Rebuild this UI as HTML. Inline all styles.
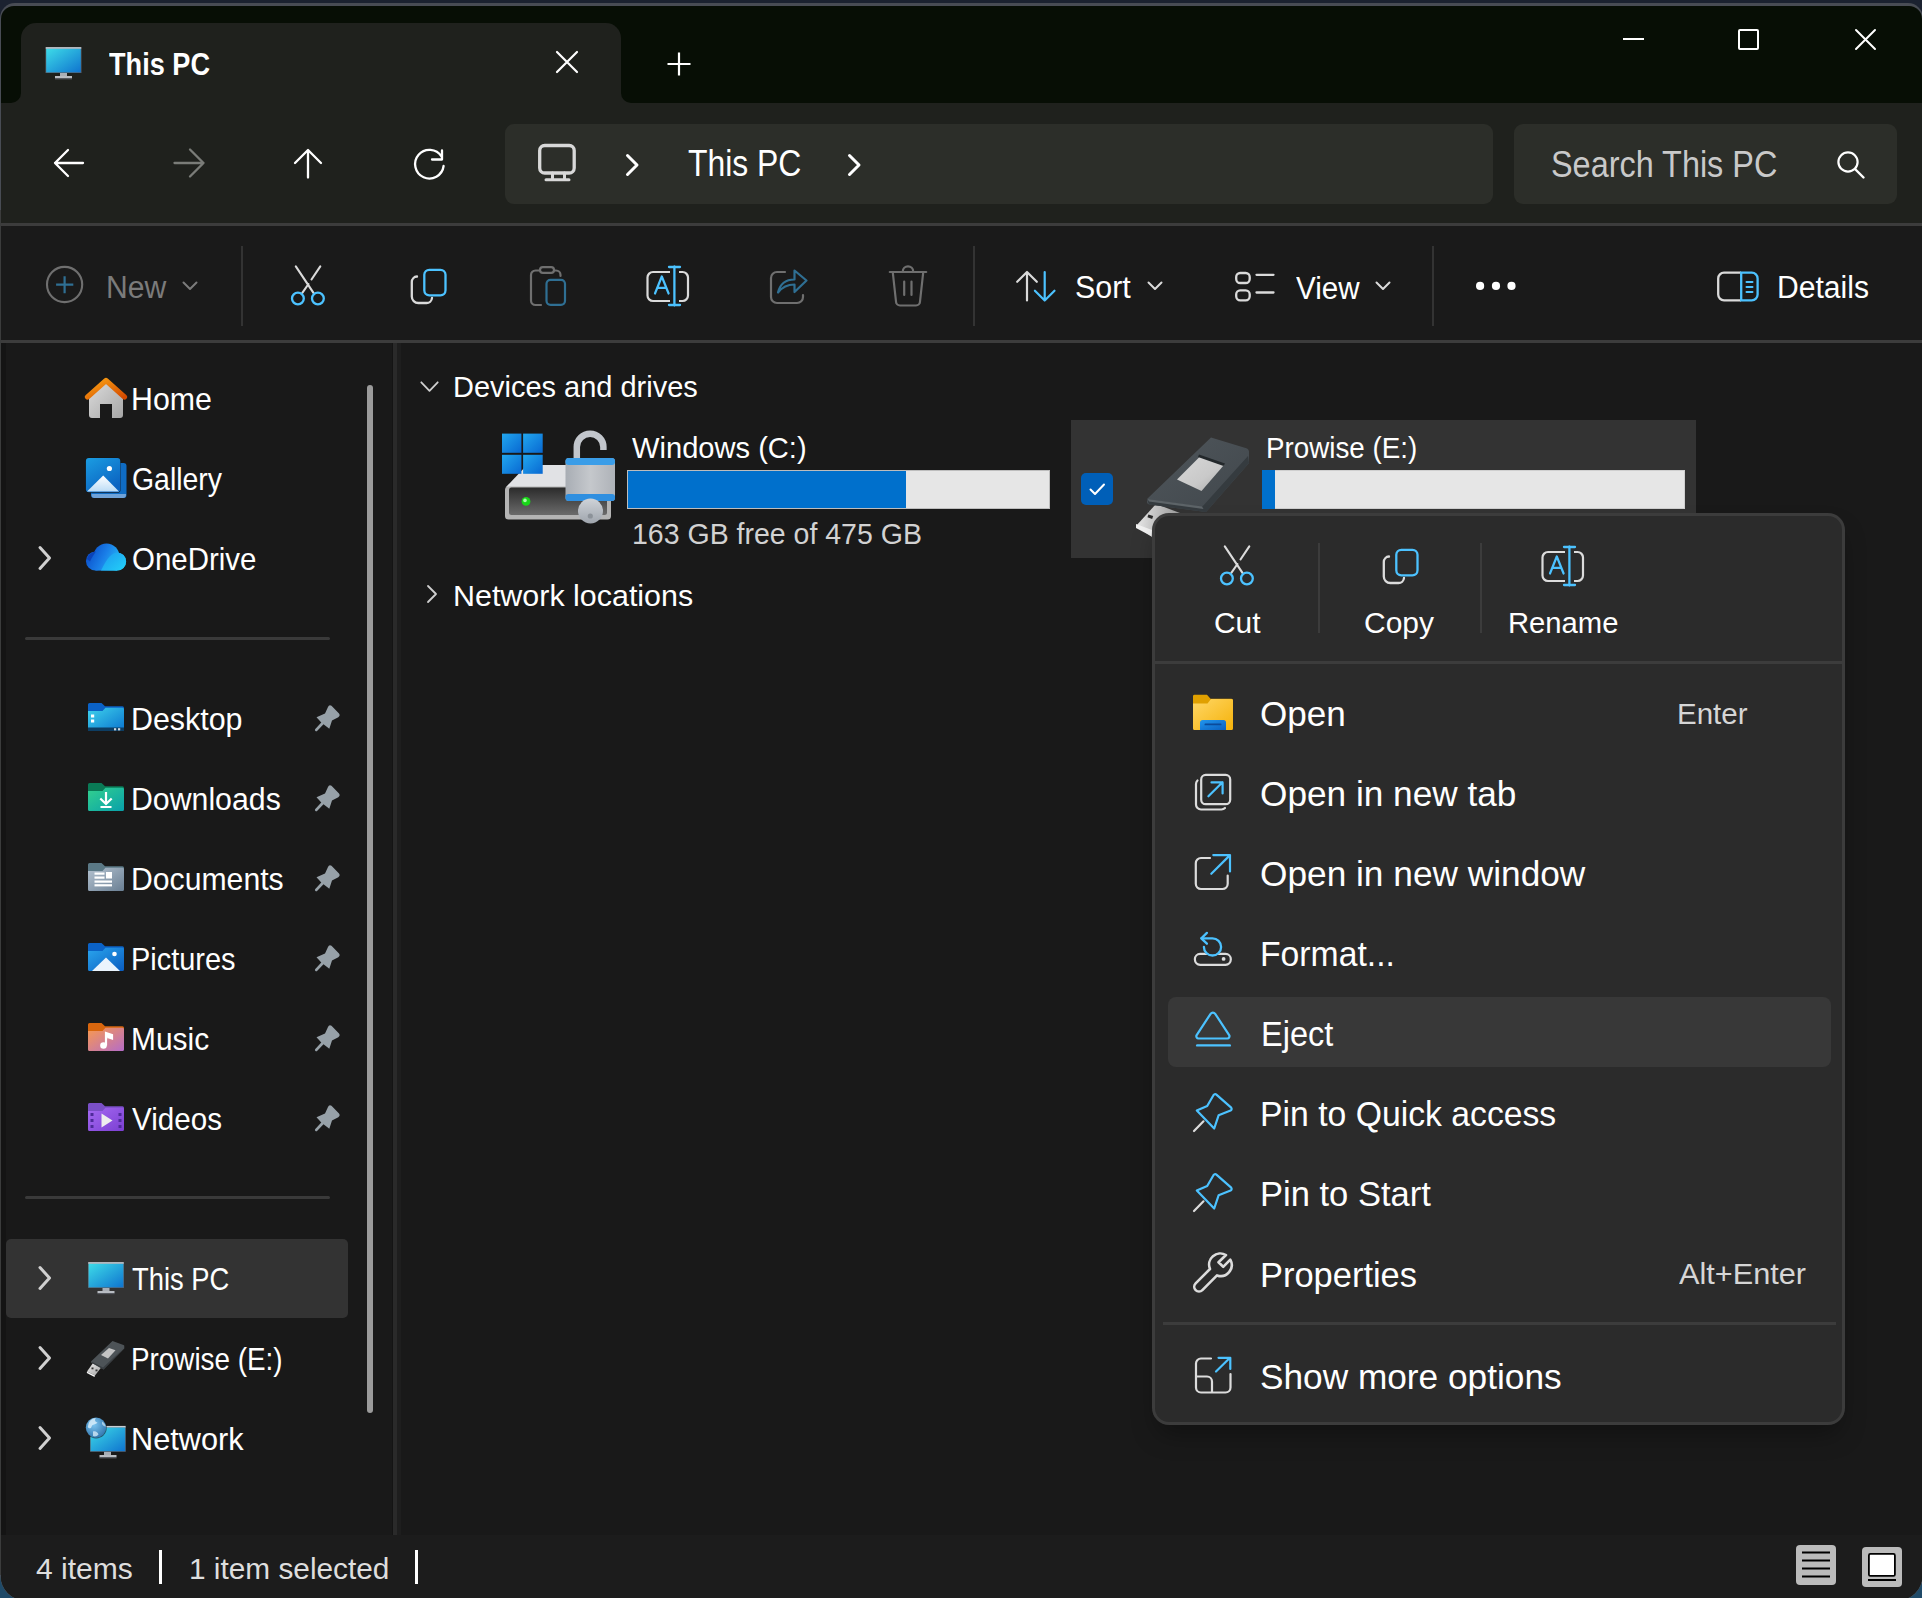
<!DOCTYPE html>
<html><head><meta charset="utf-8">
<style>
*{margin:0;padding:0;box-sizing:border-box}
html,body{width:1922px;height:1598px;overflow:hidden;background:#1b2230}
body{position:relative;font-family:"Liberation Sans",sans-serif;color:#fff}
.a{position:absolute}
.t{position:absolute;white-space:nowrap;line-height:1;transform-origin:0 0}
svg{position:absolute;overflow:visible}
</style></head><body>
<div class="a" style="left:0;top:1540px;width:40px;height:58px;background:#1f4a68"></div>
<div class="a" style="left:1880px;top:1540px;width:42px;height:58px;background:#1f4a68"></div>
<div class="a" style="left:0;top:3px;width:1923px;height:1598px;border-radius:15px 15px 26px 26px;background:#484c54"></div>
<div class="a" style="left:1px;top:6px;width:1921px;height:1594px;border-radius:13px 13px 24px 24px;background:#070e05;overflow:hidden"><div class="a" style="left:0;top:97px;width:1921px;height:120px;background:#1f211d"></div><div class="a" style="left:0;top:217px;width:1921px;height:3px;background:#3c3c3c"></div><div class="a" style="left:0;top:220px;width:1921px;height:114px;background:#1a1a1a"></div><div class="a" style="left:0;top:334px;width:1921px;height:3px;background:#3c3c3c"></div><div class="a" style="left:0;top:337px;width:1921px;height:1192px;background:#191919"></div><div class="a" style="left:391px;top:337px;width:1px;height:1192px;background:#141414"></div><div class="a" style="left:392px;top:337px;width:4px;height:1192px;background:#2a2a2a"></div><div class="a" style="left:396px;top:337px;width:4px;height:1192px;background:#1e1e1e"></div><div class="a" style="left:0;top:1529px;width:1921px;height:63px;background:#1c1c1c"></div></div>
<div class="a" style="left:0;top:210px;width:1px;height:1365px;background:#3b3c3c"></div>
<div class="a" style="left:1px;top:343px;width:5px;height:1192px;background:#141414"></div>
<div class="a" style="left:21px;top:23px;width:600px;height:85px;border-radius:15px 15px 0 0;background:#1f211d"></div>
<div class="a" style="left:1px;top:89px;width:20px;height:14px;background:#1f211d"></div>
<div class="a" style="left:1px;top:81px;width:20px;height:22px;background:#070e05;border-radius:0 0 10px 0"></div>
<div class="a" style="left:621px;top:89px;width:20px;height:14px;background:#1f211d"></div>
<div class="a" style="left:621px;top:81px;width:20px;height:22px;background:#070e05;border-radius:0 0 0 10px"></div>
<svg style="left:45px;top:46px" width="38" height="34" viewBox="0 0 38 34">
<defs><linearGradient id="mon" x1="0" y1="0" x2="1" y2="1"><stop offset="0" stop-color="#3ddbe8"/><stop offset="1" stop-color="#0f74cf"/></linearGradient></defs>
<rect x="0.5" y="1" width="36" height="26" fill="#5a5e66"/>
<rect x="0.8" y="1.2" width="35.4" height="1.6" fill="#c9cdd3"/>
<rect x="1.2" y="2.8" width="34.6" height="23.6" fill="url(#mon)"/>
<rect x="15" y="27" width="7" height="3.5" fill="#a9aeb5"/>
<rect x="10" y="30" width="17" height="2.2" fill="#b8bcc2"/>
<rect x="10" y="32" width="17" height="1.4" fill="#55585e"/>
</svg>
<svg style="left:556px;top:51px" width="22" height="22" viewBox="0 0 22 22"><path d="M1 1L21 21M21 1L1 21" stroke="#ffffff" stroke-width="2.2" stroke-linecap="round"/></svg>
<svg style="left:667px;top:52px" width="24" height="24" viewBox="0 0 24 24"><path d="M12 0.5V23.5M0.5 12H23.5" stroke="#ffffff" stroke-width="2.2"/></svg>
<div class="a" style="left:1623px;top:38px;width:21px;height:2px;background:#ffffff"></div>
<div class="a" style="left:1738px;top:29px;width:21px;height:21px;border:2px solid #ffffff;border-radius:2px"></div>
<svg style="left:1855px;top:29px" width="21" height="21" viewBox="0 0 21 21"><path d="M1 1L20 20M20 1L1 20" stroke="#ffffff" stroke-width="2" stroke-linecap="round"/></svg>
<svg style="left:50px;top:145px" width="40" height="36" viewBox="0 0 40 36"><path d="M5 18H33M18 5L5 18L18 31" stroke="#ffffff" stroke-width="2.3" fill="none" stroke-linecap="round" stroke-linejoin="round"/></svg>
<svg style="left:170px;top:145px" width="40" height="36" viewBox="0 0 40 36"><path d="M4.5 18H33.5M20 4.5L33.5 18L20 31.5" stroke="#7a7c78" stroke-width="2.3" fill="none" stroke-linecap="round" stroke-linejoin="round"/></svg>
<svg style="left:290px;top:145px" width="36" height="40" viewBox="0 0 36 40"><path d="M18 5.3V32.6M5 18L18 5L31 18" stroke="#ffffff" stroke-width="2.3" fill="none" stroke-linecap="round" stroke-linejoin="round"/></svg>
<svg style="left:410px;top:146.5px" width="40" height="40" viewBox="0 0 40 40"><path d="M31.5 9.5A14.3 14.3 0 1 0 33.6 19" stroke="#ffffff" stroke-width="2.3" fill="none" stroke-linecap="round"/><path d="M22 12.5H32V3.5" stroke="#ffffff" stroke-width="2.3" fill="none" stroke-linecap="round" stroke-linejoin="round"/></svg>
<div class="a" style="left:505px;top:124px;width:988px;height:80px;border-radius:9px;background:#2c2e29"></div>
<div class="a" style="left:1514px;top:124px;width:383px;height:80px;border-radius:9px;background:#2c2e29"></div>
<svg style="left:536px;top:142px" width="42" height="42" viewBox="0 0 42 42"><rect x="3.7" y="3.5" width="34.5" height="27.5" rx="5" stroke="#d8d8d8" stroke-width="3.3" fill="none"/><path d="M16.5 31V36M28.5 31V36M10 37.7H33" stroke="#d8d8d8" stroke-width="3" stroke-linecap="round"/></svg>
<svg style="left:624px;top:152px" width="18" height="26" viewBox="0 0 18 26"><path d="M3.5 3.5L13 13L3.5 22.5" stroke="#ffffff" stroke-width="3" fill="none" stroke-linecap="round" stroke-linejoin="round"/></svg>
<svg style="left:846px;top:152px" width="18" height="26" viewBox="0 0 18 26"><path d="M3.5 3.5L13 13L3.5 22.5" stroke="#ffffff" stroke-width="3" fill="none" stroke-linecap="round" stroke-linejoin="round"/></svg>
<svg style="left:1834px;top:150px" width="34" height="32" viewBox="0 0 34 32"><circle cx="14" cy="12" r="9.6" stroke="#ffffff" stroke-width="2.2" fill="none"/><path d="M21 19L29.5 27.5" stroke="#ffffff" stroke-width="2.4" stroke-linecap="round"/></svg>
<svg style="left:44px;top:264px" width="42" height="42" viewBox="0 0 42 42"><circle cx="20.6" cy="20.5" r="17.6" stroke="#6f6f6f" stroke-width="2.1" fill="none"/><path d="M20.6 12.3V29.3M12.1 20.7H29.3" stroke="#2f6f93" stroke-width="2.2"/></svg>
<svg style="left:180px;top:278px" width="20" height="16" viewBox="0 0 20 16"><path d="M3.5 4.5L10 11L16.5 4.5" stroke="#7b7b7b" stroke-width="2" fill="none" stroke-linecap="round" stroke-linejoin="round"/></svg>
<div class="a" style="left:241px;top:246px;width:2px;height:80px;background:#333333"></div>
<div class="a" style="left:973px;top:246px;width:2px;height:80px;background:#333333"></div>
<div class="a" style="left:1432px;top:246px;width:2px;height:80px;background:#333333"></div>
<svg style="left:286px;top:262px" width="44" height="48" viewBox="0 0 44 48"><path d="M9.8 4.3L27.5 30.9M34.3 4.3L25.5 17.5M22.5 22L16.3 30.9" stroke="#dadada" stroke-width="2.1" fill="none" stroke-linecap="round"/><circle cx="11.9" cy="36.5" r="5.9" stroke="#4cc2ff" stroke-width="2.3" fill="none"/><circle cx="31.9" cy="36.5" r="5.9" stroke="#4cc2ff" stroke-width="2.3" fill="none"/></svg>
<svg style="left:406px;top:264px" width="44" height="44" viewBox="0 0 44 44"><path d="M11 12.5A5.5 5.5 0 0 0 5.8 18V32.5A6.5 6.5 0 0 0 12.3 39H20.5A5.5 5.5 0 0 0 26 34" stroke="#dadada" stroke-width="2.3" fill="none" stroke-linecap="round"/><rect x="18.3" y="5.8" width="21.2" height="25.5" rx="5" stroke="#4cc2ff" stroke-width="2.3" fill="none"/></svg>
<svg style="left:526px;top:262px" width="46" height="48" viewBox="0 0 46 48"><path d="M13.5 8.5H9.5A4.5 4.5 0 0 0 5 13V38.5A4.5 4.5 0 0 0 9.5 43H15M29 8.5H30A4.5 4.5 0 0 1 34.5 13V14" stroke="#6f6f6f" stroke-width="2.2" fill="none" stroke-linecap="round"/><rect x="14" y="5.2" width="14" height="5.6" rx="2.8" stroke="#6f6f6f" stroke-width="2.2" fill="none"/><rect x="20.5" y="17.8" width="18.5" height="25" rx="4" stroke="#2f6f93" stroke-width="2.2" fill="none"/></svg>
<svg style="left:644px;top:262px" width="48" height="48" viewBox="0 0 48 48"><path d="M26 10H9A5.5 5.5 0 0 0 3.5 15.5V33.5A5.5 5.5 0 0 0 9 39H26M35 10H38.5A5.5 5.5 0 0 1 44 15.5V33.5A5.5 5.5 0 0 1 38.5 39H35" stroke="#dadada" stroke-width="2.2" fill="none"/><path d="M30.4 4.5V43.5M25 5H36M25 43H36" stroke="#4cc2ff" stroke-width="2.3" fill="none" stroke-linecap="round"/><path d="M11 31.5L17.8 14.5L24.6 31.5M13.3 25.8H22.3" stroke="#4cc2ff" stroke-width="2.2" fill="none" stroke-linecap="round" stroke-linejoin="round"/></svg>
<svg style="left:766px;top:264px" width="46" height="44" viewBox="0 0 46 44"><path d="M19 8H11A6 6 0 0 0 5 14V33A6 6 0 0 0 11 39H31A6 6 0 0 0 37 33V31" stroke="#6f6f6f" stroke-width="2.2" fill="none" stroke-linecap="round"/><path d="M12 28.5C14 20 20 15.5 28.5 15.5V6.5L40.5 16.5L28.5 28V20.5C21 20.5 15.5 24 12 28.5Z" stroke="#2f6f93" stroke-width="2.2" fill="none" stroke-linejoin="round"/></svg>
<svg style="left:886px;top:262px" width="44" height="48" viewBox="0 0 44 48"><path d="M3.8 10H40.2" stroke="#6f6f6f" stroke-width="2.2" stroke-linecap="round"/><path d="M16.8 9.5A5.2 5.2 0 0 1 27.2 9.5" stroke="#6f6f6f" stroke-width="2.2" fill="none"/><path d="M6.8 10.5L10 39.5A4 4 0 0 0 14 43.5H30A4 4 0 0 0 34 39.5L37.2 10.5" stroke="#6f6f6f" stroke-width="2.2" fill="none" stroke-linejoin="round"/><path d="M18.2 19.5V33M25.5 19.5V33" stroke="#6f6f6f" stroke-width="2.2" stroke-linecap="round"/></svg>
<svg style="left:1012px;top:266px" width="48" height="40" viewBox="0 0 48 40"><path d="M15 6V34.5M5.2 15.8L15 6L24.8 15.8" stroke="#dadada" stroke-width="2.2" fill="none" stroke-linecap="round" stroke-linejoin="round"/><path d="M32.7 6V34.5M22.9 24.7L32.7 34.5L42.5 24.7" stroke="#4cc2ff" stroke-width="2.2" fill="none" stroke-linecap="round" stroke-linejoin="round"/></svg>
<svg style="left:1144px;top:278px" width="20" height="16" viewBox="0 0 20 16"><path d="M4.5 4.5L11 11L17.5 4.5" stroke="#dadada" stroke-width="2" fill="none" stroke-linecap="round" stroke-linejoin="round"/></svg>
<svg style="left:1230px;top:268px" width="50" height="36" viewBox="0 0 50 36"><rect x="6.2" y="5" width="13.5" height="10" rx="4" stroke="#dadada" stroke-width="2.3" fill="none"/><rect x="6.2" y="22.3" width="13.5" height="10" rx="4" stroke="#dadada" stroke-width="2.3" fill="none"/><path d="M26.5 6.8H43.5M26.5 24.5H43.5" stroke="#dadada" stroke-width="2.3" stroke-linecap="round"/></svg>
<svg style="left:1372px;top:278px" width="20" height="16" viewBox="0 0 20 16"><path d="M4.5 4.5L11 11L17.5 4.5" stroke="#dadada" stroke-width="2" fill="none" stroke-linecap="round" stroke-linejoin="round"/></svg>
<svg style="left:1470px;top:276px" width="50" height="20" viewBox="0 0 50 20"><circle cx="10.1" cy="9.9" r="4.1" fill="#ffffff"/><circle cx="26" cy="9.9" r="4.1" fill="#ffffff"/><circle cx="41.5" cy="9.9" r="4.1" fill="#ffffff"/></svg>
<svg style="left:1714px;top:268px" width="48" height="36" viewBox="0 0 48 36"><path d="M27 4.7H10A5.8 5.8 0 0 0 4.2 10.5V26.5A5.8 5.8 0 0 0 10 32.3H27" stroke="#dadada" stroke-width="2.3" fill="none"/><path d="M27.2 4.7H37.8A5.8 5.8 0 0 1 43.6 10.5V26.5A5.8 5.8 0 0 1 37.8 32.3H27.2Z" stroke="#4cc2ff" stroke-width="2.3" fill="none"/><path d="M32.5 14H38.5M32.5 19H38.5M32.5 24H38.5" stroke="#4cc2ff" stroke-width="2" stroke-linecap="round"/></svg>
<div class="a" style="left:6px;top:1238.5px;width:342px;height:79px;border-radius:5px;background:#333333"></div>
<div class="a" style="left:25px;top:637px;width:305px;height:3px;border-radius:1.5px;background:#3a3a3a"></div>
<div class="a" style="left:25px;top:1196px;width:305px;height:3px;border-radius:1.5px;background:#3a3a3a"></div>
<div class="a" style="left:367px;top:385px;width:6px;height:1028px;border-radius:3px;background:#9b9b9b"></div>
<svg style="left:36px;top:544px" width="20" height="28" viewBox="0 0 20 28"><path d="M4 3.5L13.5 14L4 24.5" stroke="#d0d0d0" stroke-width="3" fill="none" stroke-linecap="round" stroke-linejoin="round"/></svg>
<svg style="left:36px;top:1264px" width="20" height="28" viewBox="0 0 20 28"><path d="M4 3.5L13.5 14L4 24.5" stroke="#d0d0d0" stroke-width="3" fill="none" stroke-linecap="round" stroke-linejoin="round"/></svg>
<svg style="left:36px;top:1344px" width="20" height="28" viewBox="0 0 20 28"><path d="M4 3.5L13.5 14L4 24.5" stroke="#d0d0d0" stroke-width="3" fill="none" stroke-linecap="round" stroke-linejoin="round"/></svg>
<svg style="left:36px;top:1424px" width="20" height="28" viewBox="0 0 20 28"><path d="M4 3.5L13.5 14L4 24.5" stroke="#d0d0d0" stroke-width="3" fill="none" stroke-linecap="round" stroke-linejoin="round"/></svg>
<svg style="left:84px;top:376px" width="44" height="44" viewBox="0 0 44 44">
<defs><linearGradient id="hb" x1="0" y1="0" x2="1" y2="1"><stop offset="0" stop-color="#dcdcdc"/><stop offset="1" stop-color="#a6a6a6"/></linearGradient>
<linearGradient id="hr" x1="0" y1="0" x2="1" y2="1"><stop offset="0" stop-color="#fba414"/><stop offset="1" stop-color="#d44a00"/></linearGradient></defs>
<path d="M5 20L22 6L39 20V39A3 3 0 0 1 36 42H28V28H16V42H8A3 3 0 0 1 5 39Z" fill="url(#hb)"/>
<path d="M3.5 21L22 4.5L40.5 21" stroke="url(#hr)" stroke-width="5.2" fill="none" stroke-linecap="round" stroke-linejoin="round"/>
</svg>
<svg style="left:84px;top:456px" width="44" height="44" viewBox="0 0 44 44">
<defs><linearGradient id="gf" x1="0" y1="0" x2="0.6" y2="1"><stop offset="0" stop-color="#1b9de2"/><stop offset="1" stop-color="#0b63c1"/></linearGradient>
<linearGradient id="gm" x1="0" y1="0" x2="0" y2="1"><stop offset="0" stop-color="#ffffff"/><stop offset="1" stop-color="#bcdcf6"/></linearGradient></defs>
<rect x="7" y="7" width="35.5" height="35" rx="3" fill="#0f6cc4"/>
<path d="M7.5 38H42V39A3 3 0 0 1 39 42H10.5A3 3 0 0 1 7.5 39Z" fill="#6fa2d8"/>
<rect x="1.5" y="1.8" width="35" height="35" rx="3" fill="#121212"/>
<rect x="1.9" y="1.9" width="34.4" height="34.4" rx="3" fill="url(#gf)"/>
<path d="M3 35.5L19.2 19.5L35 35.5Z" fill="url(#gm)"/>
<circle cx="25.4" cy="12.5" r="2.6" fill="#fff"/>
</svg>
<svg style="left:84px;top:541px" width="44" height="32" viewBox="0 0 44 32">
<defs><linearGradient id="od" gradientUnits="userSpaceOnUse" x1="4" y1="8" x2="40" y2="26"><stop offset="0" stop-color="#0a4cc8"/><stop offset="0.45" stop-color="#1a7fe8"/><stop offset="1" stop-color="#2ad2f9"/></linearGradient>
<linearGradient id="od2" x1="0" y1="0" x2="1" y2="1"><stop offset="0" stop-color="#1d9cf0"/><stop offset="1" stop-color="#22d0f8"/></linearGradient></defs>
<g fill="url(#od)"><circle cx="11.5" cy="20" r="9.6"/><circle cx="22.5" cy="15.5" r="13"/><circle cx="33" cy="20.5" r="9.1"/><rect x="11.5" y="18" width="21.5" height="11.6"/></g>
<path d="M17 29.6C21 22 25 12.5 33 11.4A9.1 9.1 0 0 1 33 29.6Z" fill="url(#od2)" opacity="0.9"/>
<path d="M3 18C4.5 13.5 8 11 12 10.5C10 13 7.5 17 6 20.5Z" fill="#0a3bb0" opacity="0.75"/>
</svg>
<svg style="left:86px;top:701px" width="40" height="32" viewBox="0 0 40 32">
<defs><linearGradient id="fdesk" x1="0" y1="0" x2="1" y2="1"><stop offset="0" stop-color="#3fd3ec"/><stop offset="1" stop-color="#0a74cf"/></linearGradient></defs>
<path d="M2 3.5A1.5 1.5 0 0 1 3.5 2H15.5L19 5.2H36.5A1.5 1.5 0 0 1 38 6.7V10H2Z" fill="#0b62c6"/>
<path d="M2 10H16.5L19.5 6.7H36.5A1.5 1.5 0 0 1 38 8.2V28.5A1.5 1.5 0 0 1 36.5 30H3.5A1.5 1.5 0 0 1 2 28.5Z" fill="url(#fdesk)"/>
<rect x="2" y="26.5" width="36" height="3.5" fill="#0d3d62"/><rect x="5" y="13.5" width="3.2" height="3" fill="#fff"/><rect x="5" y="18.5" width="3.2" height="3" fill="#fff"/><rect x="28" y="27.2" width="2.2" height="2.2" fill="#cfd8e0"/><rect x="32" y="27.2" width="2.2" height="2.2" fill="#cfd8e0"/>
</svg>
<svg style="left:86px;top:781px" width="40" height="32" viewBox="0 0 40 32">
<defs><linearGradient id="fdl" x1="0" y1="0" x2="1" y2="1"><stop offset="0" stop-color="#33d18e"/><stop offset="1" stop-color="#08a0aa"/></linearGradient></defs>
<path d="M2 3.5A1.5 1.5 0 0 1 3.5 2H15.5L19 5.2H36.5A1.5 1.5 0 0 1 38 6.7V10H2Z" fill="#0a7a56"/>
<path d="M2 10H16.5L19.5 6.7H36.5A1.5 1.5 0 0 1 38 8.2V28.5A1.5 1.5 0 0 1 36.5 30H3.5A1.5 1.5 0 0 1 2 28.5Z" fill="url(#fdl)"/>
<path d="M20 11V22.5M14.3 17.5L20 23L25.7 17.5M14.5 26H25.5" stroke="#fff" stroke-width="2.2" fill="none"/>
</svg>
<svg style="left:86px;top:861px" width="40" height="32" viewBox="0 0 40 32">
<defs><linearGradient id="fdoc" x1="0" y1="0" x2="1" y2="1"><stop offset="0" stop-color="#b4c2d0"/><stop offset="1" stop-color="#6a7f93"/></linearGradient></defs>
<path d="M2 3.5A1.5 1.5 0 0 1 3.5 2H15.5L19 5.2H36.5A1.5 1.5 0 0 1 38 6.7V10H2Z" fill="#5b7986"/>
<path d="M2 10H16.5L19.5 6.7H36.5A1.5 1.5 0 0 1 38 8.2V28.5A1.5 1.5 0 0 1 36.5 30H3.5A1.5 1.5 0 0 1 2 28.5Z" fill="url(#fdoc)"/>
<rect x="8.5" y="11.5" width="10" height="2.2" fill="#fff"/><rect x="8.5" y="15.5" width="10" height="2.2" fill="#fff"/><rect x="20" y="11" width="6" height="6.5" fill="#fff"/><rect x="8.5" y="19.5" width="17.5" height="2.2" fill="#fff"/><rect x="8.5" y="23.2" width="17.5" height="2.2" fill="#fff"/>
</svg>
<svg style="left:86px;top:941px" width="40" height="32" viewBox="0 0 40 32">
<defs><linearGradient id="fpic" x1="0" y1="0" x2="1" y2="1"><stop offset="0" stop-color="#2aa6ee"/><stop offset="1" stop-color="#0a5cc0"/></linearGradient></defs>
<path d="M2 3.5A1.5 1.5 0 0 1 3.5 2H15.5L19 5.2H36.5A1.5 1.5 0 0 1 38 6.7V10H2Z" fill="#0b62c6"/>
<path d="M2 10H16.5L19.5 6.7H36.5A1.5 1.5 0 0 1 38 8.2V28.5A1.5 1.5 0 0 1 36.5 30H3.5A1.5 1.5 0 0 1 2 28.5Z" fill="url(#fpic)"/>
<path d="M6 30L20 16.5L34 30Z" fill="#eaf4fd"/><circle cx="28.5" cy="13" r="2.3" fill="#fff"/>
</svg>
<svg style="left:86px;top:1021px" width="40" height="32" viewBox="0 0 40 32">
<defs><linearGradient id="fmus" x1="0" y1="0" x2="1" y2="1"><stop offset="0" stop-color="#f99a4e"/><stop offset="1" stop-color="#b56cc8"/></linearGradient></defs>
<path d="M2 3.5A1.5 1.5 0 0 1 3.5 2H15.5L19 5.2H36.5A1.5 1.5 0 0 1 38 6.7V10H2Z" fill="#d8660e"/>
<path d="M2 10H16.5L19.5 6.7H36.5A1.5 1.5 0 0 1 38 8.2V28.5A1.5 1.5 0 0 1 36.5 30H3.5A1.5 1.5 0 0 1 2 28.5Z" fill="url(#fmus)"/>
<circle cx="17.5" cy="24.5" r="3.3" fill="#fff"/><path d="M20 24.5V12L26 14V17.5L21.5 16" stroke="#fff" stroke-width="2.2" fill="#fff"/>
</svg>
<svg style="left:86px;top:1101px" width="40" height="32" viewBox="0 0 40 32">
<defs><linearGradient id="fvid" x1="0" y1="0" x2="1" y2="1"><stop offset="0" stop-color="#a56af2"/><stop offset="1" stop-color="#7b3fd2"/></linearGradient></defs>
<path d="M2 3.5A1.5 1.5 0 0 1 3.5 2H15.5L19 5.2H36.5A1.5 1.5 0 0 1 38 6.7V10H2Z" fill="#7a4fc6"/>
<path d="M2 10H16.5L19.5 6.7H36.5A1.5 1.5 0 0 1 38 8.2V28.5A1.5 1.5 0 0 1 36.5 30H3.5A1.5 1.5 0 0 1 2 28.5Z" fill="url(#fvid)"/>
<rect x="4.5" y="12" width="3" height="3" fill="#4e2a9a"/><rect x="4.5" y="18" width="3" height="3" fill="#4e2a9a"/><rect x="4.5" y="24" width="3" height="3" fill="#4e2a9a"/><rect x="32.5" y="12" width="3" height="3" fill="#4e2a9a"/><rect x="32.5" y="18" width="3" height="3" fill="#4e2a9a"/><rect x="32.5" y="24" width="3" height="3" fill="#4e2a9a"/><path d="M15.5 12.5L26.5 19.5L15.5 26.5Z" fill="#eee"/>
</svg>
<svg style="left:305px;top:695px" width="45" height="45" viewBox="0 0 45 45"><path d="M11.5 22.3L20 18.5L23 12A2.5 2.5 0 0 1 26.5 10.8L34 18.6A2.5 2.5 0 0 1 33.3 22.2L27 25.5L24.3 33.8L18.5 29.3L12.3 35.8A1.3 1.3 0 0 1 10.3 34L16.3 27.6Z" fill="#97a1a8"/></svg>
<svg style="left:305px;top:775px" width="45" height="45" viewBox="0 0 45 45"><path d="M11.5 22.3L20 18.5L23 12A2.5 2.5 0 0 1 26.5 10.8L34 18.6A2.5 2.5 0 0 1 33.3 22.2L27 25.5L24.3 33.8L18.5 29.3L12.3 35.8A1.3 1.3 0 0 1 10.3 34L16.3 27.6Z" fill="#97a1a8"/></svg>
<svg style="left:305px;top:855px" width="45" height="45" viewBox="0 0 45 45"><path d="M11.5 22.3L20 18.5L23 12A2.5 2.5 0 0 1 26.5 10.8L34 18.6A2.5 2.5 0 0 1 33.3 22.2L27 25.5L24.3 33.8L18.5 29.3L12.3 35.8A1.3 1.3 0 0 1 10.3 34L16.3 27.6Z" fill="#97a1a8"/></svg>
<svg style="left:305px;top:935px" width="45" height="45" viewBox="0 0 45 45"><path d="M11.5 22.3L20 18.5L23 12A2.5 2.5 0 0 1 26.5 10.8L34 18.6A2.5 2.5 0 0 1 33.3 22.2L27 25.5L24.3 33.8L18.5 29.3L12.3 35.8A1.3 1.3 0 0 1 10.3 34L16.3 27.6Z" fill="#97a1a8"/></svg>
<svg style="left:305px;top:1015px" width="45" height="45" viewBox="0 0 45 45"><path d="M11.5 22.3L20 18.5L23 12A2.5 2.5 0 0 1 26.5 10.8L34 18.6A2.5 2.5 0 0 1 33.3 22.2L27 25.5L24.3 33.8L18.5 29.3L12.3 35.8A1.3 1.3 0 0 1 10.3 34L16.3 27.6Z" fill="#97a1a8"/></svg>
<svg style="left:305px;top:1095px" width="45" height="45" viewBox="0 0 45 45"><path d="M11.5 22.3L20 18.5L23 12A2.5 2.5 0 0 1 26.5 10.8L34 18.6A2.5 2.5 0 0 1 33.3 22.2L27 25.5L24.3 33.8L18.5 29.3L12.3 35.8A1.3 1.3 0 0 1 10.3 34L16.3 27.6Z" fill="#97a1a8"/></svg>
<svg style="left:86px;top:1260px" width="40" height="36" viewBox="0 0 40 36">
<defs><linearGradient id="mon2" x1="0" y1="0" x2="1" y2="1"><stop offset="0" stop-color="#3ddbe8"/><stop offset="1" stop-color="#0f74cf"/></linearGradient></defs>
<rect x="2" y="2" width="36" height="26" fill="#5a5e66"/><rect x="2.3" y="2.2" width="35.4" height="1.6" fill="#c9cdd3"/>
<rect x="2.6" y="3.8" width="34.8" height="23.6" fill="url(#mon2)"/>
<rect x="16.5" y="28" width="7" height="3.5" fill="#a9aeb5"/><rect x="11.5" y="31" width="17" height="2.2" fill="#b8bcc2"/><rect x="11.5" y="33" width="17" height="1.2" fill="#55585e"/>
</svg>
<svg style="left:84px;top:1338px" width="44" height="44" viewBox="0 0 44 44">
<defs><linearGradient id="usc" x1="0" y1="0" x2="1" y2="1"><stop offset="0" stop-color="#eeeeee"/><stop offset="1" stop-color="#a0a0a0"/></linearGradient></defs>
<path d="M9 25L17.5 29L11 37.5L3 33.5Z" fill="url(#usc)"/>
<path d="M3 33.5L11 37.5L10.5 39L2.8 35Z" fill="#f4f4f4"/>
<rect x="7.5" y="29.5" width="2" height="1.8" fill="#333"/><rect x="11.5" y="31.5" width="2" height="1.8" fill="#333"/>
<path d="M28.5 3L39.5 7A1.3 1.3 0 0 1 40.3 8.5V10.5L19.5 31.5L8 25A1.2 1.2 0 0 1 7 23.5Z" fill="#4d5357"/>
<path d="M40.3 9.5L19.5 31.5L8 25L7.5 23.5L19 29.5Z" fill="#383d41"/>
<path d="M25 10L31.5 12.2L24 20.5L17 17Z" fill="#c4c4c4"/>
</svg>
<svg style="left:84px;top:1414px" width="44" height="48" viewBox="0 0 44 48">
<defs><linearGradient id="mon3" x1="0" y1="0" x2="1" y2="1"><stop offset="0" stop-color="#3ddbe8"/><stop offset="1" stop-color="#0f74cf"/></linearGradient>
<radialGradient id="globe" cx="0.4" cy="0.35" r="0.75"><stop offset="0" stop-color="#7cc4f0"/><stop offset="1" stop-color="#2a6fa8"/></radialGradient></defs>
<rect x="6" y="11.8" width="35.8" height="26" fill="#5a5e66"/><rect x="6.3" y="12" width="35.2" height="1.6" fill="#c9cdd3"/>
<rect x="6.6" y="13.6" width="34.6" height="23.6" fill="url(#mon3)"/>
<rect x="20" y="37.8" width="7" height="3.8" fill="#a9aeb5"/><rect x="15.5" y="41" width="17" height="2.2" fill="#b8bcc2"/><rect x="15.5" y="43" width="17" height="1.4" fill="#55585e"/>
<circle cx="12" cy="13.6" r="10.8" fill="#1a1a1a" opacity="0.6"/>
<circle cx="12" cy="13.6" r="10.2" fill="url(#globe)"/>
<path d="M4.5 10C5.5 6 9 4 12 4.2C10 6 11.5 8 13.5 8.5C12 10.5 8 10 7.5 13C7 15 4.5 14.5 3.8 13Z" fill="#e6f4fc" opacity="0.75"/>
<path d="M9 17.5C11 16.5 14 18 14.5 20.5C13 22.5 10.5 23 9 22Z" fill="#e6f4fc" opacity="0.7"/>
<path d="M18 7.5C20 8.5 21.5 10.5 21.8 12.5C20.5 13 19 11.5 18 10Z" fill="#e6f4fc" opacity="0.6"/>
</svg>
<svg style="left:416px;top:376px" width="26" height="20" viewBox="0 0 26 20"><path d="M5.3 6.3L13.5 14.8L21.7 6.3" stroke="#cfcfcf" stroke-width="1.8" fill="none" stroke-linecap="round" stroke-linejoin="round"/></svg>
<svg style="left:422px;top:581px" width="20" height="26" viewBox="0 0 20 26"><path d="M6 5L14 13L6 21" stroke="#cfcfcf" stroke-width="1.8" fill="none" stroke-linecap="round" stroke-linejoin="round"/></svg>
<svg style="left:495px;top:425px" width="130" height="105" viewBox="0 0 130 105">
<defs><linearGradient id="win" x1="0" y1="0" x2="1" y2="1"><stop offset="0" stop-color="#22a7ee"/><stop offset="1" stop-color="#0868d2"/></linearGradient>
<linearGradient id="dfront" x1="0" y1="0" x2="0" y2="1"><stop offset="0" stop-color="#2b2b2b"/><stop offset="1" stop-color="#6b6b6b"/></linearGradient>
<linearGradient id="lockb" x1="0" y1="0" x2="1" y2="0"><stop offset="0" stop-color="#a8adb4"/><stop offset="0.5" stop-color="#c5c8cc"/><stop offset="1" stop-color="#aeb2b8"/></linearGradient>
<linearGradient id="key" x1="0" y1="0" x2="0" y2="1"><stop offset="0" stop-color="#cfd3d8"/><stop offset="1" stop-color="#9fa5ad"/></linearGradient></defs>
<path d="M10.5 62.5L32 40H71V62.5Z" fill="#e1e2e5"/>
<rect x="10" y="61.5" width="106" height="33" rx="3.5" fill="#b4b4b4"/>
<rect x="14" y="62.5" width="98" height="27.5" rx="2.5" fill="url(#dfront)"/>
<circle cx="31" cy="76.4" r="4.4" fill="#19d619"/><circle cx="30" cy="75.4" r="1.8" fill="#a8ffa8"/>
<rect x="7" y="8.6" width="19.4" height="19.2" fill="url(#win)"/><rect x="28.1" y="8.6" width="19.6" height="19.2" fill="url(#win)"/>
<rect x="7" y="29.8" width="19.4" height="19" fill="url(#win)"/><rect x="28.1" y="29.8" width="19.6" height="19" fill="url(#win)"/>
<path d="M81.8 33V22A13.3 13.3 0 0 1 108.4 22V25" stroke="#c2c6cc" stroke-width="6.5" fill="none"/>
<rect x="70.5" y="33" width="49.5" height="43" rx="3.5" fill="url(#lockb)"/>
<rect x="70.5" y="33" width="49.5" height="7" rx="3" fill="#3a9de8"/>
<rect x="70.5" y="69" width="49.5" height="7" rx="3" fill="#2f8fe0"/>
<circle cx="95.5" cy="86" r="12.5" fill="url(#key)"/>
<circle cx="95.3" cy="91" r="2.6" fill="#8c9299"/>
</svg>
<div class="a" style="left:627px;top:470px;width:423px;height:39px;background:#bdbdbd"></div>
<div class="a" style="left:628px;top:471px;width:421px;height:37px;background:#e6e6e6"></div>
<div class="a" style="left:628px;top:471px;width:278px;height:37px;background:#0070cc"></div>
<div class="a" style="left:1071px;top:420px;width:625px;height:138px;background:#333333"></div>
<div class="a" style="left:1081px;top:473px;width:32px;height:32px;border-radius:5px;background:#005fb8"></div>
<svg style="left:1081px;top:473px" width="32" height="32" viewBox="0 0 32 32"><path d="M9.5 16.5L14 21L23 11.5" stroke="#fff" stroke-width="2" fill="none" stroke-linecap="round" stroke-linejoin="round"/></svg>
<div class="a" style="left:1262px;top:470px;width:423px;height:39px;background:#e6e6e6;border:1px solid #cfcfcf"></div>
<div class="a" style="left:1262px;top:470px;width:13px;height:39px;background:#0070cc"></div>
<svg style="left:1130px;top:430px" width="130" height="130" viewBox="0 0 130 130">
<defs><linearGradient id="ub" x1="0" y1="0" x2="1" y2="1"><stop offset="0" stop-color="#4f565b"/><stop offset="1" stop-color="#41474c"/></linearGradient>
<linearGradient id="uw" x1="0" y1="0" x2="1" y2="1"><stop offset="0" stop-color="#d8d8d8"/><stop offset="0.6" stop-color="#c9c9c9"/><stop offset="1" stop-color="#a8a8a8"/></linearGradient>
<linearGradient id="uc" x1="0" y1="0" x2="1" y2="0"><stop offset="0" stop-color="#e8e8e8"/><stop offset="1" stop-color="#9a9a9a"/></linearGradient></defs>
<path d="M26 74L50 83L22 107L6 96Z" fill="url(#uc)"/>
<path d="M6 94L22 100L21 106L6 98Z" fill="#f2f2f2"/>
<rect x="18" y="85" width="5" height="3" fill="#2a2a2a" transform="rotate(20 20 86)"/>
<path d="M81 7.5L115.5 18A4 4 0 0 1 119 22.5V33L76 82L19 74.5A2.5 2.5 0 0 1 17 72V69Z" fill="url(#ub)"/>
<path d="M118 26L119 33L76 82L19 74.5L17 69L72 77Z" fill="#353b3f"/>
<path d="M17.5 69L72 76.5L73.5 79L19 71.5Z" fill="#5d6468"/>
<path d="M70 26.5L94 35L71.5 61L47 49.5Z" fill="url(#uw)"/>
<path d="M69 24.5L95 33.5L93.5 36L68 27Z" fill="#23282b"/>
</svg>
<div class="a" style="left:1152px;top:513px;width:693px;height:912px;border-radius:17px;box-shadow:0 14px 26px -6px rgba(0,0,0,0.35)"></div>
<div class="a" style="left:1152px;top:513px;width:693px;height:912px;border-radius:17px;background:#3c3c3c"></div>
<div class="a" style="left:1155px;top:516px;width:687px;height:906px;border-radius:14px;background:#2b2b2b"></div>
<div class="a" style="left:1155px;top:661px;width:687px;height:3px;background:#3c3c3c"></div>
<div class="a" style="left:1317.5px;top:543px;width:2px;height:90px;background:#3c3c3c"></div>
<div class="a" style="left:1480px;top:543px;width:2px;height:90px;background:#3c3c3c"></div>
<div class="a" style="left:1163px;top:1322px;width:673px;height:3px;background:#3c3c3c"></div>
<div class="a" style="left:1168px;top:997px;width:663px;height:70px;border-radius:8px;background:#383838"></div>
<svg style="left:1215.4px;top:541.7px" width="44" height="48" viewBox="0 0 44 48"><path d="M9.8 4.3L27.5 30.9M34.3 4.3L25.5 17.5M22.5 22L16.3 30.9" stroke="#dcdcdc" stroke-width="2.1" fill="none" stroke-linecap="round"/><circle cx="11.9" cy="36.5" r="5.9" stroke="#4cc2ff" stroke-width="2.3" fill="none"/><circle cx="31.9" cy="36.5" r="5.9" stroke="#4cc2ff" stroke-width="2.3" fill="none"/></svg>
<svg style="left:1378px;top:544px" width="44" height="44" viewBox="0 0 44 44"><path d="M11 12.5A5.5 5.5 0 0 0 5.8 18V32.5A6.5 6.5 0 0 0 12.3 39H20.5A5.5 5.5 0 0 0 26 34" stroke="#dcdcdc" stroke-width="2.3" fill="none" stroke-linecap="round"/><rect x="18.3" y="5.8" width="21.2" height="25.5" rx="5" stroke="#4cc2ff" stroke-width="2.3" fill="none"/></svg>
<svg style="left:1538.8px;top:541.5px" width="48" height="48" viewBox="0 0 48 48"><path d="M26 10H9A5.5 5.5 0 0 0 3.5 15.5V33.5A5.5 5.5 0 0 0 9 39H26M35 10H38.5A5.5 5.5 0 0 1 44 15.5V33.5A5.5 5.5 0 0 1 38.5 39H35" stroke="#dcdcdc" stroke-width="2.2" fill="none"/><path d="M30.4 4.5V43.5M25 5H36M25 43H36" stroke="#4cc2ff" stroke-width="2.3" fill="none" stroke-linecap="round"/><path d="M11 31.5L17.8 14.5L24.6 31.5M13.3 25.8H22.3" stroke="#4cc2ff" stroke-width="2.2" fill="none" stroke-linecap="round" stroke-linejoin="round"/></svg>
<svg style="left:1190px;top:692px" width="46" height="42" viewBox="0 0 46 42">
<defs><linearGradient id="yf" x1="0" y1="0" x2="1" y2="1"><stop offset="0" stop-color="#ffd766"/><stop offset="1" stop-color="#f5b20a"/></linearGradient>
<linearGradient id="bf" x1="0" y1="0" x2="1" y2="1"><stop offset="0" stop-color="#2196ee"/><stop offset="1" stop-color="#0a5fc0"/></linearGradient></defs>
<path d="M3 4A1.5 1.5 0 0 1 4.5 2.8H17L20.5 6.8H41.5A1.5 1.5 0 0 1 43 8.3V12H3Z" fill="#e0a000"/>
<path d="M3 11.5H17.5L21 7H41.5A1.5 1.5 0 0 1 43 8.5V36.5A1.5 1.5 0 0 1 41.5 38H4.5A1.5 1.5 0 0 1 3 36.5Z" fill="url(#yf)"/>
<path d="M10 30.5A2.5 2.5 0 0 1 12.5 28H33.5A2.5 2.5 0 0 1 36 30.5V38H10Z" fill="url(#bf)"/>
<rect x="14.5" y="31.5" width="17" height="1.8" rx="0.9" fill="#0b4a9a"/>
</svg>
<svg style="left:1185px;top:765px" width="56" height="56" viewBox="0 0 56 56">
<path d="M12.5 15.5A5 5 0 0 0 11 19V39.5A5 5 0 0 0 16 44.5H36.5A5 5 0 0 0 40 43" stroke="#dcdcdc" stroke-width="2.2" fill="none" stroke-linecap="round"/>
<rect x="16.2" y="9.9" width="29" height="29.3" rx="4.5" stroke="#dcdcdc" stroke-width="2.2" fill="none"/>
<path d="M23.4 31.3L37.5 17.2M26.5 17.4H37.6V28.5" stroke="#4cc2ff" stroke-width="2.2" fill="none" stroke-linecap="round" stroke-linejoin="round"/>
</svg>
<svg style="left:1185px;top:765px" width="56" height="136" viewBox="0 0 56 136">
<path d="M25 93H16A5.2 5.2 0 0 0 10.8 98.2V118.8A5.2 5.2 0 0 0 16 124H37.5A5.2 5.2 0 0 0 42.7 118.8V110.5" stroke="#dcdcdc" stroke-width="2.2" fill="none" stroke-linecap="round"/>
<path d="M26.3 108.8L45 90.1M28.3 90.1H45V106.5" stroke="#4cc2ff" stroke-width="2.2" fill="none" stroke-linecap="round" stroke-linejoin="round"/>
</svg>
<svg style="left:1185px;top:765px" width="56" height="210" viewBox="0 0 56 210">
<rect x="9.9" y="188.9" width="35.9" height="10.9" rx="5.2" stroke="#dcdcdc" stroke-width="2.2" fill="none"/>
<circle cx="38.6" cy="193.9" r="1.9" fill="#dcdcdc"/>
<circle cx="27.5" cy="181.9" r="9.5" fill="#2b2b2b"/><rect x="9.9" y="193" width="35.9" height="6.8" fill="none"/>
<path d="M16.5 173.3H27.5A8.6 8.6 0 1 1 18.9 181.9" stroke="#4cc2ff" stroke-width="2.3" fill="none" stroke-linecap="round"/>
<path d="M21.9 167.9L16.3 173.3L21.9 178.7" stroke="#4cc2ff" stroke-width="2.3" fill="none" stroke-linecap="round" stroke-linejoin="round"/>
</svg>
<svg style="left:1190px;top:1005px" width="46" height="46" viewBox="0 0 46 46">
<path d="M20.6 8.8A2.8 2.8 0 0 1 25.2 8.8L39.3 30.3A2.3 2.3 0 0 1 37.4 33.5H8.4A2.3 2.3 0 0 1 6.5 30.3Z" stroke="#4cc2ff" stroke-width="2.2" fill="none" stroke-linejoin="round"/>
<path d="M7.2 40.4H39.8" stroke="#4cc2ff" stroke-width="2.4" stroke-linecap="round"/>
</svg>
<svg style="left:1185px;top:1085px" width="56" height="56" viewBox="0 0 56 56">
<path d="M9 46L18.5 36.3" stroke="#dcdcdc" stroke-width="2.2" stroke-linecap="round"/>
<path d="M11.8 25.6L22.2 21L28.3 10.5A2 2 0 0 1 31.4 9.6L46.2 22.6A1.8 1.8 0 0 1 45.6 25.4L33.6 30.3L29.2 43.5Z" stroke="#4cc2ff" stroke-width="2.2" fill="none" stroke-linejoin="round"/>
</svg>
<svg style="left:1185px;top:1165px" width="56" height="56" viewBox="0 0 56 56">
<path d="M9 46L18.5 36.3" stroke="#dcdcdc" stroke-width="2.2" stroke-linecap="round"/>
<path d="M11.8 25.6L22.2 21L28.3 10.5A2 2 0 0 1 31.4 9.6L46.2 22.6A1.8 1.8 0 0 1 45.6 25.4L33.6 30.3L29.2 43.5Z" stroke="#4cc2ff" stroke-width="2.2" fill="none" stroke-linejoin="round"/>
</svg>
<svg style="left:1185px;top:1245px" width="56" height="56" viewBox="0 0 56 56">
<path d="M41 10L33.5 17.3L38.2 21.8L45.3 14.7A11 11 0 0 1 32 30.4L17.36 45.06A4.75 4.75 0 0 1 10.64 38.34L25 24A11.2 11.2 0 0 1 41 10Z" stroke="#dcdcdc" stroke-width="2.6" fill="none" stroke-linejoin="round"/>
</svg>
<svg style="left:1185px;top:1345px" width="56" height="56" viewBox="0 0 56 56">
<path d="M26 13.5H16A5 5 0 0 0 11 18.5V42.5A5 5 0 0 0 16 47.5H40.5A5 5 0 0 0 45.5 42.5V29" stroke="#dcdcdc" stroke-width="2.2" fill="none" stroke-linecap="round"/>
<path d="M11.5 31.5H22A5 5 0 0 1 27 36.5V47" stroke="#dcdcdc" stroke-width="2.2" fill="none"/>
<path d="M31 26.5L45 12.8M33.5 12.8H45.3V24" stroke="#4cc2ff" stroke-width="2.2" fill="none" stroke-linecap="round" stroke-linejoin="round"/>
</svg>
<div class="a" style="left:159px;top:1550px;width:3px;height:34px;background:#ffffff"></div>
<div class="a" style="left:415px;top:1550px;width:3px;height:34px;background:#ffffff"></div>
<svg style="left:1796px;top:1545px" width="40" height="40" viewBox="0 0 40 40"><rect x="0" y="0" width="40" height="40" rx="4" fill="#bbbbbb"/><path d="M6 7.5H34M6 15.5H34M6 23.5H34M6 31.5H34" stroke="#000" stroke-width="2"/></svg>
<svg style="left:1862px;top:1547px" width="40" height="40" viewBox="0 0 40 40"><rect x="0" y="0" width="40" height="40" rx="4" fill="#bbbbbb"/><rect x="6.9" y="6.9" width="26" height="22" rx="1.5" fill="#fff" stroke="#000" stroke-width="1.8"/><path d="M6 33H34" stroke="#000" stroke-width="2"/></svg>
<div class="t" style="left:108.75px;top:49.88px;font-size:30.86px;font-weight:700;color:#ffffff;transform:scaleX(0.8793)">This PC</div>
<div class="t" style="left:687.64px;top:146.06px;font-size:36.43px;font-weight:400;color:#ffffff;transform:scaleX(0.8755)">This PC</div>
<div class="t" style="left:1550.63px;top:146.86px;font-size:36.43px;font-weight:400;color:#c9c9c9;transform:scaleX(0.8898)">Search This PC</div>
<div class="t" style="left:105.88px;top:272.06px;font-size:31.00px;font-weight:400;color:#7b7b7b;transform:scaleX(0.9729)">New</div>
<div class="t" style="left:1075.08px;top:272.06px;font-size:31.00px;font-weight:400;color:#ffffff;transform:scaleX(0.9802)">Sort</div>
<div class="t" style="left:1295.50px;top:272.56px;font-size:31.00px;font-weight:400;color:#ffffff;transform:scaleX(0.9545)">View</div>
<div class="t" style="left:1777.48px;top:271.56px;font-size:31.00px;font-weight:400;color:#ffffff;transform:scaleX(0.9714)">Details</div>
<div class="t" style="left:130.95px;top:384.22px;font-size:30.57px;font-weight:400;color:#ffffff;transform:scaleX(0.9920)">Home</div>
<div class="t" style="left:131.59px;top:464.22px;font-size:30.57px;font-weight:400;color:#ffffff;transform:scaleX(0.9292)">Gallery</div>
<div class="t" style="left:131.55px;top:544.22px;font-size:30.57px;font-weight:400;color:#ffffff;transform:scaleX(0.9638)">OneDrive</div>
<div class="t" style="left:130.55px;top:704.22px;font-size:30.57px;font-weight:400;color:#ffffff;transform:scaleX(0.9945)">Desktop</div>
<div class="t" style="left:130.55px;top:784.22px;font-size:30.57px;font-weight:400;color:#ffffff;transform:scaleX(0.9905)">Downloads</div>
<div class="t" style="left:130.56px;top:864.22px;font-size:30.57px;font-weight:400;color:#ffffff;transform:scaleX(0.9877)">Documents</div>
<div class="t" style="left:130.64px;top:944.22px;font-size:30.57px;font-weight:400;color:#ffffff;transform:scaleX(0.9474)">Pictures</div>
<div class="t" style="left:130.58px;top:1024.22px;font-size:30.57px;font-weight:400;color:#ffffff;transform:scaleX(0.9788)">Music</div>
<div class="t" style="left:131.50px;top:1104.22px;font-size:30.57px;font-weight:400;color:#ffffff;transform:scaleX(0.9687)">Videos</div>
<div class="t" style="left:131.52px;top:1264.22px;font-size:30.57px;font-weight:400;color:#ffffff;transform:scaleX(0.8959)">This PC</div>
<div class="t" style="left:130.61px;top:1344.22px;font-size:30.57px;font-weight:400;color:#ffffff;transform:scaleX(0.9108)">Prowise (E:)</div>
<div class="t" style="left:130.53px;top:1424.22px;font-size:30.57px;font-weight:400;color:#ffffff;transform:scaleX(1.0038)">Network</div>
<div class="t" style="left:453.11px;top:372.06px;font-size:30.29px;font-weight:400;color:#ffffff;transform:scaleX(0.9569)">Devices and drives</div>
<div class="t" style="left:631.60px;top:433.46px;font-size:30.29px;font-weight:400;color:#ffffff;transform:scaleX(0.9612)">Windows (C:)</div>
<div class="t" style="left:631.86px;top:519.26px;font-size:30.29px;font-weight:400;color:#d2d2d2;transform:scaleX(0.9411)">163 GB free of 475 GB</div>
<div class="t" style="left:452.82px;top:581.26px;font-size:30.29px;font-weight:400;color:#ffffff;transform:scaleX(1.0050)">Network locations</div>
<div class="t" style="left:1266.24px;top:433.46px;font-size:30.29px;font-weight:400;color:#ffffff;transform:scaleX(0.9171)">Prowise (E:)</div>
<div class="t" style="left:1213.90px;top:608.01px;font-size:29.29px;font-weight:400;color:#ffffff;transform:scaleX(1.0197)">Cut</div>
<div class="t" style="left:1364.29px;top:608.01px;font-size:29.29px;font-weight:400;color:#ffffff;transform:scaleX(1.0233)">Copy</div>
<div class="t" style="left:1508.24px;top:608.01px;font-size:29.29px;font-weight:400;color:#ffffff;transform:scaleX(0.9978)">Rename</div>
<div class="t" style="left:1260.23px;top:696.81px;font-size:35.43px;font-weight:400;color:#ffffff;transform:scaleX(0.9906)">Open</div>
<div class="t" style="left:1260.22px;top:776.81px;font-size:35.43px;font-weight:400;color:#ffffff;transform:scaleX(0.9937)">Open in new tab</div>
<div class="t" style="left:1260.22px;top:856.81px;font-size:35.43px;font-weight:400;color:#ffffff;transform:scaleX(0.9953)">Open in new window</div>
<div class="t" style="left:1260.36px;top:936.81px;font-size:35.43px;font-weight:400;color:#ffffff;transform:scaleX(0.9519)">Format...</div>
<div class="t" style="left:1260.52px;top:1016.81px;font-size:35.43px;font-weight:400;color:#ffffff;transform:scaleX(0.9178)">Eject</div>
<div class="t" style="left:1260.41px;top:1096.91px;font-size:35.43px;font-weight:400;color:#ffffff;transform:scaleX(0.9524)">Pin to Quick access</div>
<div class="t" style="left:1260.35px;top:1177.01px;font-size:35.43px;font-weight:400;color:#ffffff;transform:scaleX(0.9747)">Pin to Start</div>
<div class="t" style="left:1260.36px;top:1257.81px;font-size:35.43px;font-weight:400;color:#ffffff;transform:scaleX(0.9725)">Properties</div>
<div class="t" style="left:1260.21px;top:1359.81px;font-size:35.43px;font-weight:400;color:#ffffff;transform:scaleX(0.9947)">Show more options</div>
<div class="t" style="left:1677.08px;top:699.46px;font-size:30.29px;font-weight:400;color:#d6d6d6;transform:scaleX(0.9745)">Enter</div>
<div class="t" style="left:1679.00px;top:1259.46px;font-size:30.29px;font-weight:400;color:#d6d6d6;transform:scaleX(1.0134)">Alt+Enter</div>
<div class="t" style="left:36.05px;top:1553.66px;font-size:30.29px;font-weight:400;color:#dedede;transform:scaleX(0.9929)">4 items</div>
<div class="t" style="left:188.62px;top:1553.66px;font-size:30.29px;font-weight:400;color:#dedede;transform:scaleX(0.9842)">1 item selected</div>

</body></html>
